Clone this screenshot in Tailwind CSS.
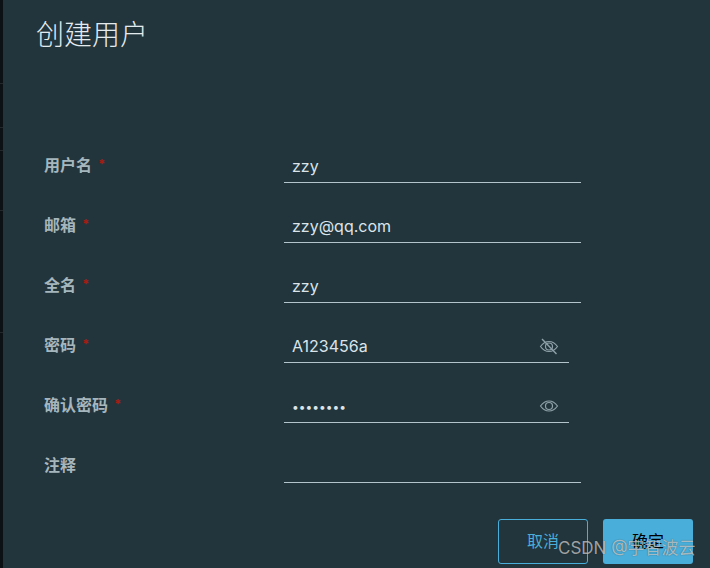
<!DOCTYPE html>
<html lang="zh">
<head>
  <meta charset="UTF-8"/>
  <meta name="viewport" content="width=device-width, initial-scale=1.0"/>
  <title>创建用户</title>
  <script src="https://cdn.jsdelivr.net/npm/@tailwindcss/browser@4"></script>
</head>
<body class="h-[568px] w-[710px] overflow-hidden bg-[#22343c] font-['Inter','Noto_Sans_CJK_SC',sans-serif]">
  <div class="relative flex h-[568px]">
    <!-- dark strip of the page behind the modal -->
    <div class="flex w-[3px] shrink-0 flex-col bg-[#0c1115]">
      <div class="mt-[83px] h-px bg-[#22282c]"></div>
      <div class="mt-[43px] h-px bg-[#22282c]"></div>
      <div class="mt-[22px] h-px bg-[#22282c]"></div>
      <div class="mt-[59px] h-px bg-[#22282c]"></div>
      <div class="mt-[121px] h-px bg-[#22282c]"></div>
    </div>

    <div class="flex-1">
      <h1 class="h-[123px] pl-[33px] pt-[13px] text-[28px] leading-[44px] font-light text-[#e4ebee]">创建用户</h1>

      <!-- Form -->
      <form class="flex flex-col pl-[41px]">
        <div class="flex h-[60px] items-end">
          <label class="flex h-[36px] w-[240px] items-center text-[16px] font-bold text-[#a6b6bd]">用户名<span class="ml-[6px] text-[13px] text-[#a81c10]">*</span></label>
          <input value="zzy" class="h-[36px] w-[297px] border-b border-[#b3c4cb] bg-transparent pl-[8px] pt-[2px] text-[16px] text-[#dbe4e8] outline-none"/>
        </div>
        <div class="flex h-[60px] items-end">
          <label class="flex h-[36px] w-[240px] items-center text-[16px] font-bold text-[#a6b6bd]">邮箱<span class="ml-[6px] text-[13px] text-[#a81c10]">*</span></label>
          <input value="zzy@qq.com" class="h-[36px] w-[297px] border-b border-[#b3c4cb] bg-transparent pl-[8px] pt-[2px] text-[16px] text-[#dbe4e8] outline-none"/>
        </div>
        <div class="flex h-[60px] items-end">
          <label class="flex h-[36px] w-[240px] items-center text-[16px] font-bold text-[#a6b6bd]">全名<span class="ml-[6px] text-[13px] text-[#a81c10]">*</span></label>
          <input value="zzy" class="h-[36px] w-[297px] border-b border-[#b3c4cb] bg-transparent pl-[8px] pt-[2px] text-[16px] text-[#dbe4e8] outline-none"/>
        </div>
        <div class="flex h-[60px] items-end">
          <label class="flex h-[36px] w-[240px] items-center text-[16px] font-bold text-[#a6b6bd]">密码<span class="ml-[6px] text-[13px] text-[#a81c10]">*</span></label>
          <div class="flex h-[36px] w-[285px] items-center border-b border-[#b3c4cb] pr-[10px]">
            <input value="A123456a" class="h-full min-w-0 flex-1 bg-transparent pl-[8px] pt-[2px] text-[16px] text-[#dbe4e8] outline-none"/>
            <svg class="mt-[3px] h-[20px] w-[20px]" viewBox="0 0 20 20" fill="none" stroke="#8fa1a9" stroke-width="1.2">
              <path d="M1.5 10.5C4 7 7 5.5 10 5.5s6 1.5 8.500 5C16 14 13 15.500 10 15.500S4 14 1.500 10.500Z"/>
              <circle cx="10" cy="10.500" r="3.500"/>
              <path d="M3 3l14.500 15" stroke-width="1.400"/>
            </svg>
          </div>
        </div>
        <div class="flex h-[60px] items-end">
          <label class="flex h-[36px] w-[240px] items-center text-[16px] font-bold text-[#a6b6bd]">确认密码<span class="ml-[6px] text-[13px] text-[#a81c10]">*</span></label>
          <div class="flex h-[36px] w-[285px] items-center border-b border-[#b3c4cb] pr-[10px]">
            <input type="password" value="12345678" class="h-full min-w-0 flex-1 bg-transparent pl-[8px] pt-[4px] text-[12px] text-[#dbe4e8] outline-none"/>
            <svg class="mt-[3px] h-[20px] w-[20px]" viewBox="0 0 20 20" fill="none" stroke="#8fa1a9" stroke-width="1.2">
              <path d="M1.500 10C4 6.500 7 5 10 5s6 1.500 8.500 5C16 13.500 13 15 10 15S4 13.500 1.500 10Z"/>
              <circle cx="10" cy="10" r="3.500"/>
            </svg>
          </div>
        </div>
        <div class="flex h-[60px] items-end">
          <label class="flex h-[36px] w-[240px] items-center text-[16px] font-bold text-[#a6b6bd]">注释</label>
          <input class="h-[36px] w-[297px] border-b border-[#b3c4cb] bg-transparent pl-[8px] pt-[2px] text-[16px] text-[#dbe4e8] outline-none"/>
        </div>

        <!-- Actions -->
        <div class="mt-[36px] flex gap-[15px] pl-[454px]">
          <button type="button" class="h-[45px] w-[90px] rounded-[3px] border border-[#49aed9] pb-[2px] text-[16px] text-[#49aed9]">取消</button>
          <button type="button" class="h-[45px] w-[90px] rounded-[3px] bg-[#49aed9] pb-[2px] text-[16px] text-black">确定</button>
        </div>
      </form>
    </div>

    <!-- CSDN watermark -->
    <span class="absolute left-[558px] top-[537px] text-[17px] leading-[22px] whitespace-nowrap text-white/60 [text-shadow:0_0_1px_rgba(0,0,0,0.6)]">CSDN @宇智波云</span>
  </div>
</body>
</html>
